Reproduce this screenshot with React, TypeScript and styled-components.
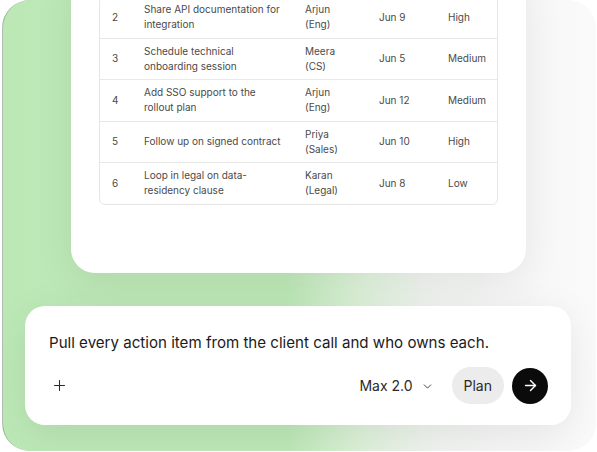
import React from "react";
import styled, { createGlobalStyle } from "styled-components";
import { Plus, ChevronDown, ArrowRight } from "lucide-react";

type Item = {
  id: number;
  task: string;
  owner: string;
  due: string;
  priority: string;
};

const items: Item[] = [
  { id: 2, task: "Share API documentation for integration", owner: "Arjun (Eng)", due: "Jun 9", priority: "High" },
  { id: 3, task: "Schedule technical onboarding session", owner: "Meera (CS)", due: "Jun 5", priority: "Medium" },
  { id: 4, task: "Add SSO support to the rollout plan", owner: "Arjun (Eng)", due: "Jun 12", priority: "Medium" },
  { id: 5, task: "Follow up on signed contract", owner: "Priya (Sales)", due: "Jun 10", priority: "High" },
  { id: 6, task: "Loop in legal on data-residency clause", owner: "Karan (Legal)", due: "Jun 8", priority: "Low" },
];

const GlobalStyle = createGlobalStyle`
  html, body {
    margin: 0;
    padding: 0;
    background: #ffffff;
  }
  body {
    font-family: Inter, "Noto Sans", "Liberation Sans", sans-serif;
    -webkit-font-smoothing: antialiased;
  }
`;

const App: React.FC = () => {
  return (
    <>
      <GlobalStyle />
      <Frame>
        <ResultCard>
          <Table>
            <colgroup>
              <col style={{ width: 32 }} />
              <col style={{ width: 161 }} />
              <col style={{ width: 74 }} />
              <col style={{ width: 69 }} />
              <col />
            </colgroup>
            <tbody>
              {items.map((item) => (
                <Row key={item.id}>
                  <Cell>{item.id}</Cell>
                  <Cell>{item.task}</Cell>
                  <Cell>{item.owner}</Cell>
                  <Cell>{item.due}</Cell>
                  <Cell>{item.priority}</Cell>
                </Row>
              ))}
            </tbody>
          </Table>
        </ResultCard>

        <Composer>
          <Prompt>
            Pull every action item from the client call and who owns each.
          </Prompt>
          <Toolbar>
            <IconButton aria-label="Add">
              <Plus size={17} strokeWidth={1.5} />
            </IconButton>
            <Spacer />
            <ModelPicker>
              Max 2.0
              <ChevronDown size={13} strokeWidth={1.6} />
            </ModelPicker>
            <PlanPill>Plan</PlanPill>
            <SendButton aria-label="Send">
              <ArrowRight size={17} strokeWidth={2} />
            </SendButton>
          </Toolbar>
        </Composer>
      </Frame>
    </>
  );
};

const Frame = styled.div`
  box-sizing: border-box;
  width: 594px;
  height: 451px;
  margin-left: 2px;
  border-radius: 28px;
  border-left: 1px solid rgba(90, 110, 90, 0.45);
  overflow: hidden;
  display: flex;
  flex-direction: column;
  background: linear-gradient(
    90deg,
    #bce8b6 0%,
    #bde8b7 48%,
    #dcf1d8 60%,
    #eff3ee 71%,
    #f6f6f6 85%,
    #fafafa 100%
  );
`;

const ResultCard = styled.div`
  box-sizing: border-box;
  width: 455px;
  height: 305px;
  margin: -32px 0 0 68px;
  padding: 28px 28px 0 28px;
  flex-shrink: 0;
  background: #ffffff;
  border-radius: 24px;
  box-shadow: 0 10px 40px rgba(0, 0, 0, 0.07);
`;

const Table = styled.table`
  width: 399px;
  table-layout: fixed;
  border-collapse: separate;
  border-spacing: 0;
  border: 1px solid #e6e6e6;
  border-radius: 6px;
  font-size: 10px;
  line-height: 15px;
  color: #4a4a4a;
`;

const Row = styled.tr`
  &:not(:last-child) td {
    border-bottom: 1px solid #e8e8e8;
  }
`;

const Cell = styled.td`
  height: 40.5px;
  padding: 0 12px;
  vertical-align: middle;
  text-align: left;
`;

const Composer = styled.div`
  box-sizing: border-box;
  width: 546px;
  height: 119px;
  margin: 33px 0 0 22px;
  flex-shrink: 0;
  padding: 24px 23px 0 24px;
  background: #ffffff;
  border-radius: 20px;
  box-shadow: 0 10px 40px rgba(0, 0, 0, 0.08);
  display: flex;
  flex-direction: column;
`;

const Prompt = styled.div`
  font-size: 15.1px;
  line-height: 24px;
  color: #1b1b1b;
  margin-top: 1px;
`;

const Toolbar = styled.div`
  display: flex;
  align-items: center;
  margin-top: 12px;
`;

const IconButton = styled.button`
  display: flex;
  align-items: center;
  justify-content: center;
  padding: 0;
  margin-left: 2px;
  border: none;
  background: none;
  color: #2a2a2a;
`;

const Spacer = styled.div`
  flex: 1;
`;

const ModelPicker = styled.button`
  display: flex;
  align-items: center;
  gap: 8px;
  padding: 0;
  margin-right: 18px;
  border: none;
  background: none;
  font-family: inherit;
  font-size: 14px;
  color: #2a2a2a;
  svg {
    margin-top: 1px;
  }
`;

const PlanPill = styled.button`
  height: 37px;
  padding: 0 12px;
  border: none;
  border-radius: 19px;
  background: #ececec;
  font-family: inherit;
  font-size: 14px;
  color: #2a2a2a;
`;

const SendButton = styled.button`
  width: 36px;
  height: 36px;
  margin-left: 8px;
  padding: 0;
  border: none;
  border-radius: 50%;
  background: #0b0b0b;
  color: #ffffff;
  display: flex;
  align-items: center;
  justify-content: center;
`;

export default App;
